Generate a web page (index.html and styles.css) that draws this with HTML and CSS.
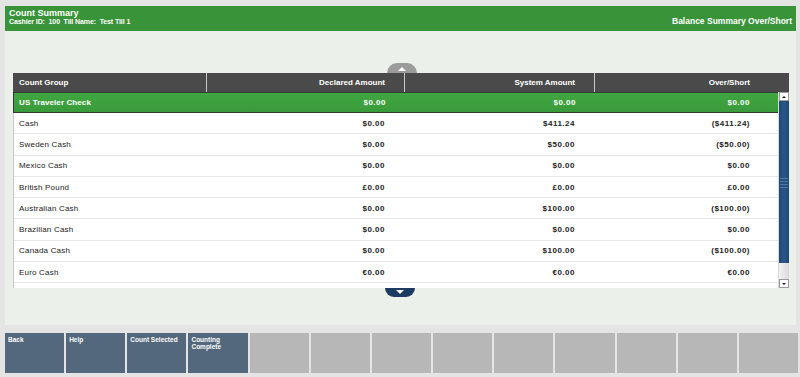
FILE: index.html
```html
<!DOCTYPE html>
<html>
<head>
<meta charset="utf-8">
<link rel="stylesheet" href="styles.css">
</head>
<body>
<div class="app">
  <header class="topbar">
    <div class="titles">
      <div class="title">Count Summary</div>
      <div class="subtitle">Cashier ID:&nbsp; 100&nbsp; Till Name:&nbsp; Test Till 1</div>
    </div>
    <div class="screen-name">Balance Summary Over/Short</div>
  </header>
  <main class="content">
    <div class="grid-wrap">
      <div class="arrow-up"><span class="tri-up"></span></div>
      <div class="thead">
        <div class="th left">Count Group</div>
        <div class="th">Declared Amount</div>
        <div class="th">System Amount</div>
        <div class="th last">Over/Short</div>
      </div>
      <div class="tbody">
        <div class="rows">
          <div class="row selected"><div class="c name">US Traveler Check</div><div class="c">$0.00</div><div class="c">$0.00</div><div class="c last">$0.00</div></div>
          <div class="row"><div class="c name">Cash</div><div class="c">$0.00</div><div class="c">$411.24</div><div class="c last">($411.24)</div></div>
          <div class="row"><div class="c name">Sweden Cash</div><div class="c">$0.00</div><div class="c">$50.00</div><div class="c last">($50.00)</div></div>
          <div class="row"><div class="c name">Mexico Cash</div><div class="c">$0.00</div><div class="c">$0.00</div><div class="c last">$0.00</div></div>
          <div class="row"><div class="c name">British Pound</div><div class="c">£0.00</div><div class="c">£0.00</div><div class="c last">£0.00</div></div>
          <div class="row"><div class="c name">Australian Cash</div><div class="c">$0.00</div><div class="c">$100.00</div><div class="c last">($100.00)</div></div>
          <div class="row"><div class="c name">Brazilian Cash</div><div class="c">$0.00</div><div class="c">$0.00</div><div class="c last">$0.00</div></div>
          <div class="row"><div class="c name">Canada Cash</div><div class="c">$0.00</div><div class="c">$100.00</div><div class="c last">($100.00)</div></div>
          <div class="row"><div class="c name">Euro Cash</div><div class="c">€0.00</div><div class="c">€0.00</div><div class="c last">€0.00</div></div>
          <div class="row"><div class="c name"></div><div class="c"></div><div class="c"></div><div class="c last"></div></div>
        </div>
        <div class="scrollbar">
          <div class="sb-btn"><span class="sb-tri-up"></span></div>
          <div class="sb-thumb"><span class="grip"></span></div>
          <div class="sb-track"></div>
          <div class="sb-btn"><span class="sb-tri-down"></span></div>
        </div>
      </div>
      <div class="arrow-down"><span class="tri-down"></span></div>
    </div>
  </main>
  <nav class="buttons">
    <div class="btn active">Back</div>
    <div class="btn active">Help</div>
    <div class="btn active">Count Selected</div>
    <div class="btn active">Counting<br>Complete</div>
    <div class="btn"></div>
    <div class="btn"></div>
    <div class="btn"></div>
    <div class="btn"></div>
    <div class="btn"></div>
    <div class="btn"></div>
    <div class="btn"></div>
    <div class="btn"></div>
    <div class="btn"></div>
  </nav>
</div>
</body>
</html>
```

FILE: styles.css
```css
* { box-sizing: border-box; }
html, body {
  margin: 0;
  padding: 0;
  width: 800px;
  height: 377px;
  overflow: hidden;
  background: #e4e4e4;
  font-family: "Liberation Sans", Arial, sans-serif;
}
.app {
  padding: 6px 4px 0 5px;
  display: flex;
  flex-direction: column;
}
.topbar {
  height: 25px;
  background: #389339;
  color: #fff;
  display: flex;
  justify-content: space-between;
  align-items: flex-end;
  padding: 2px 4px 5px 4px;
  font-weight: bold;
}
.titles { display: flex; flex-direction: column; }
.title { font-size: 9px; line-height: 10px; }
.subtitle { font-size: 7px; line-height: 8px; letter-spacing: -0.1px; }
.screen-name { font-size: 8.5px; line-height: 9px; }

.content {
  height: 294px;
  background: #ebf1ea;
  padding: 32px 7px 0 8px;
}
.grid-wrap {
  display: flex;
  flex-direction: column;
  width: 776px;
}
.arrow-up {
  align-self: center;
  width: 30px;
  height: 10px;
  margin-left: 2px;
  background: #9b9b9b;
  border-radius: 15px 15px 0 0;
  display: flex;
  justify-content: center;
  align-items: flex-end;
  padding-bottom: 2px;
}
.tri-up {
  width: 0; height: 0;
  border-left: 4px solid transparent;
  border-right: 4px solid transparent;
  border-bottom: 4px solid #fff;
}
.arrow-down {
  align-self: center;
  width: 30px;
  height: 9px;
  margin-right: 2px;
  background: #1c3b62;
  border-radius: 0 0 15px 15px;
  display: flex;
  justify-content: center;
  align-items: flex-start;
  padding-top: 2px;
}
.tri-down {
  width: 0; height: 0;
  border-left: 4px solid transparent;
  border-right: 4px solid transparent;
  border-top: 4px solid #fff;
}
.thead {
  height: 19px;
  background: #4a4a4a;
  color: #fff;
  display: grid;
  grid-template-columns: 193px 198px 190px 1fr;
  font-size: 8px;
  font-weight: bold;
}
.th {
  display: flex;
  align-items: center;
  justify-content: flex-end;
  padding-right: 19px;
  border-left: 1px solid #c8c8c8;
}
.th.left { justify-content: flex-start; padding-left: 6px; border-left: none; }
.th.last { padding-right: 39px; }

.tbody {
  height: 196px;
  display: flex;
  overflow: hidden;
}
.rows {
  width: 765px;
  background: #fff;
  border-left: 1px solid #c9c9c9;
}
.row {
  height: 21.3px;
  display: grid;
  grid-template-columns: 192px 198px 190px 1fr;
  border-bottom: 1px solid #e6e6e6;
  font-size: 8px;
  color: #222;
}
.row.selected {
  height: 21px;
  margin-left: -1px;
  background: linear-gradient(#41a640, #399a3a);
  border: 1px solid #2e3b2e;
  border-right: none;
  color: #fff;
  font-weight: bold;
  grid-template-columns: 193px 198px 190px 1fr;
}
.c {
  display: flex;
  align-items: center;
  justify-content: flex-end;
  padding-right: 19px;
  font-weight: bold;
  letter-spacing: 0.5px;
}
.c.name {
  justify-content: flex-start;
  padding-left: 5px;
  font-weight: normal;
  letter-spacing: 0.2px;
}
.row.selected .c.name { font-weight: bold; letter-spacing: 0.1px; }
.c.last { padding-right: 28px; }

.scrollbar {
  width: 11px;
  display: flex;
  flex-direction: column;
  border-left: 1px solid #d8d8d8;
}
.sb-btn {
  height: 9px;
  background: #fdfdfd;
  border: 1px solid #9a9a9a;
  display: flex;
  align-items: center;
  justify-content: center;
}
.sb-tri-up {
  width: 0; height: 0;
  border-left: 2px solid transparent;
  border-right: 2px solid transparent;
  border-bottom: 2px solid #222;
}
.sb-tri-down {
  width: 0; height: 0;
  border-left: 2px solid transparent;
  border-right: 2px solid transparent;
  border-top: 2px solid #222;
}
.sb-thumb {
  height: 162px;
  background: linear-gradient(90deg, #1f4a77, #2a5688 50%, #1f4a77);
  display: flex;
  align-items: center;
  justify-content: center;
}
.grip {
  width: 8px;
  height: 10px;
  background: repeating-linear-gradient(#4f79a6 0 1px, #23507f 1px 3px);
  margin-top: 2px;
}
.sb-track {
  flex: 1;
  background: linear-gradient(90deg, #f2f2f2, #d9d9d9);
}

.buttons {
  margin-top: 8px;
  height: 40px;
  display: grid;
  grid-template-columns: repeat(13, 1fr);
  gap: 2px;
  margin-right: -2px;
}
.btn {
  background: #b7b7b7;
  color: #fff;
  font-size: 6.5px;
  font-weight: bold;
  line-height: 7px;
  padding: 3px 3px;
}
.btn.active { background: #53677d; }
```
